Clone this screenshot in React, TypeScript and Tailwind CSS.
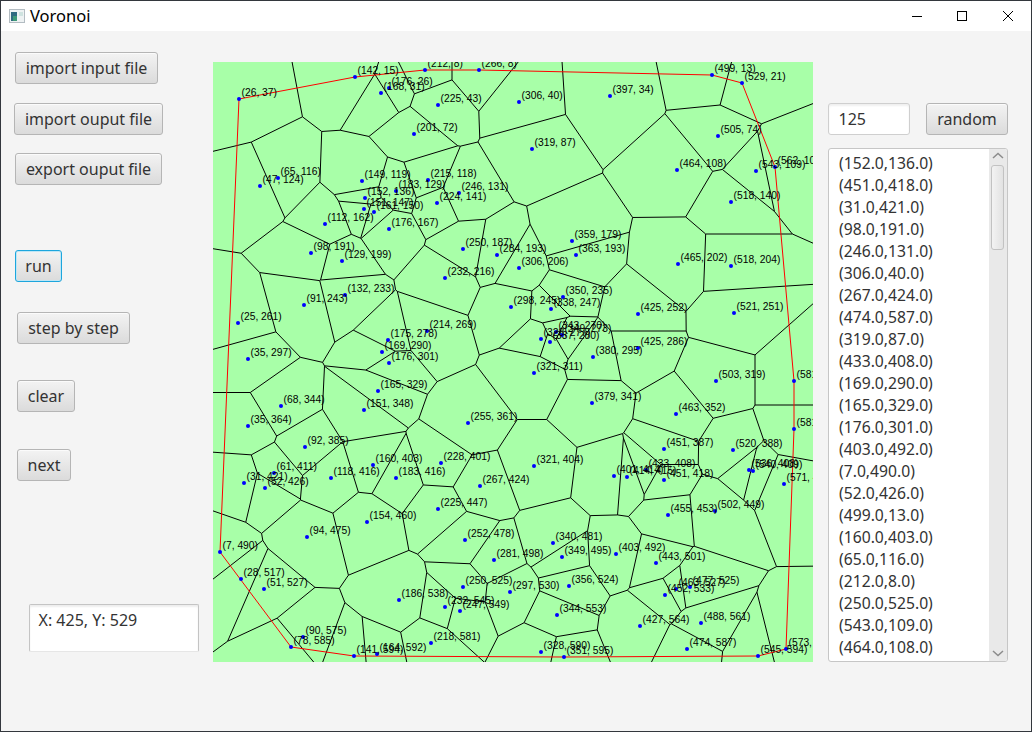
import React from "react";

type P = [number, number];

const pts: P[] = [
  [26,37],[142,15],[168,31],[176,26],[212,8],[266,8],[225,43],[306,40],[397,34],[201,72],
  [319,87],[65,116],[47,124],[149,119],[152,136],[183,129],[215,118],[246,131],[224,141],[151,147],
  [161,150],[176,167],[112,162],[250,187],[284,193],[98,191],[129,199],[232,216],[306,206],[132,233],
  [91,243],[214,269],[25,261],[35,297],[175,278],[169,290],[176,301],[298,245],[338,247],[350,235],
  [359,179],[363,193],[343,270],[349,273],[328,277],[337,280],[380,295],[321,311],[425,252],[425,286],
  [465,202],[518,204],[521,251],[464,108],[518,140],[505,74],[543,109],[562,105],[499,13],[529,21],
  [503,319],[581,319],[581,367],[463,352],[451,387],[379,341],[520,388],[433,408],[451,418],[536,408],
  [540,409],[571,422],[401,414],[414,415],[502,449],[455,453],[321,404],[340,481],[349,495],[403,492],
  [443,501],[356,524],[297,530],[344,553],[427,564],[488,561],[474,587],[452,533],[463,527],[477,525],
  [328,590],[351,595],[545,594],[573,587],[165,329],[151,348],[255,361],[68,344],[35,364],[92,385],
  [160,403],[183,416],[228,401],[267,424],[118,416],[61,411],[31,421],[52,426],[225,447],[154,460],
  [252,478],[281,498],[94,475],[7,490],[28,517],[51,527],[186,538],[250,525],[232,545],[247,549],
  [218,581],[90,575],[78,585],[141,594],[164,592],
];

const hull: P[] = [
  [26,37],[142,15],[212,8],[266,8],[499,13],[529,21],[562,105],[581,319],[581,367],[573,587],
  [545,594],[351,595],[141,594],[78,585],[7,490],
];

type V = { x: number; y: number; n: number };

function voronoiEdges(sites: P[]): string {
  let d = "";
  sites.forEach(([sx, sy], i) => {
    let poly: V[] = [
      { x: -3000, y: -3000, n: -1 },
      { x: 3600, y: -3000, n: -1 },
      { x: 3600, y: 3600, n: -1 },
      { x: -3000, y: 3600, n: -1 },
    ];
    sites.forEach(([tx, ty], j) => {
      if (j === i) return;
      const mx = (sx + tx) / 2;
      const my = (sy + ty) / 2;
      const nx = tx - sx;
      const ny = ty - sy;
      const side = (p: V) => (p.x - mx) * nx + (p.y - my) * ny;
      const out: V[] = [];
      poly.forEach((a, k) => {
        const b = poly[(k + 1) % poly.length];
        const da = side(a);
        const db = side(b);
        const t = da / (da - db);
        const cut = { x: a.x + (b.x - a.x) * t, y: a.y + (b.y - a.y) * t };
        if (da <= 0) {
          out.push(a);
          if (db > 0) out.push({ ...cut, n: j });
        } else if (db <= 0) {
          out.push({ ...cut, n: a.n });
        }
      });
      poly = out;
    });
    poly.forEach((a, k) => {
      const b = poly[(k + 1) % poly.length];
      if (a.n > i) d += `M${a.x.toFixed(2)} ${a.y.toFixed(2)}L${b.x.toFixed(2)} ${b.y.toFixed(2)}`;
    });
  });
  return d;
}

const edgePath = voronoiEdges(pts);

const listItems = [
  "(152.0,136.0)","(451.0,418.0)","(31.0,421.0)","(98.0,191.0)","(246.0,131.0)","(306.0,40.0)",
  "(267.0,424.0)","(474.0,587.0)","(319.0,87.0)","(433.0,408.0)","(169.0,290.0)","(165.0,329.0)",
  "(176.0,301.0)","(403.0,492.0)","(7.0,490.0)","(52.0,426.0)","(499.0,13.0)","(160.0,403.0)",
  "(65.0,116.0)","(212.0,8.0)","(250.0,525.0)","(543.0,109.0)","(464.0,108.0)",
];

function Btn({ label, className }: { label: string; className: string }) {
  return (
    <button
      className={`h-8 shrink-0 rounded-[3px] border border-[#b5b5b5] bg-linear-to-b from-[#f3f3f3] to-[#dbdbdb] text-center text-[16px] leading-none text-[#333] shadow-[inset_0_1px_0_#fbfbfb] ${className}`}
    >
      {label}
    </button>
  );
}

function Voronoi() {
  return (
    <svg width={600} height={600} viewBox="0 0 600 600" className="block bg-[#a8ffa8] font-['Liberation_Sans',Arial,sans-serif] text-[10.3px]">
      <path d={edgePath} fill="none" stroke="#000" strokeWidth={1} />
      <polygon points={hull.map((p) => p.join(",")).join(" ")} fill="none" stroke="#ff0000" strokeWidth={1} />
      {pts.map(([x, y]) => (
        <circle key={`${x}-${y}`} cx={x} cy={y} r={2} fill="#0000ff" />
      ))}
      {pts.map(([x, y]) => (
        <text key={`${x}-${y}`} x={x + 2.5} y={y - 3} fill="#000">
          {`(${x}, ${y})`}
        </text>
      ))}
    </svg>
  );
}

export default function App() {
  return (
    <div className="flex h-[732px] w-[1032px] flex-col overflow-hidden border border-[#33373d] bg-[#f4f4f4] font-['Noto_Sans',sans-serif] text-[#333]">
      <div className="flex h-[30px] shrink-0 items-center bg-white">
        <svg width={16} height={14} viewBox="0 0 16 14" className="ml-2 shrink-0">
          <rect x={0.5} y={0.5} width={15} height={13} fill="#eef2f3" stroke="#b3bcc2" />
          <rect x={2} y={3} width={6} height={9} fill="#2f6a80" />
          <rect x={4} y={7} width={4} height={5} fill="#3f9a78" />
          <rect x={10} y={3} width={4} height={4} fill="#cfe3e0" />
        </svg>
        <span className="ml-[5px] text-[16.5px] leading-none text-black">Voronoi</span>
        <div className="ml-auto flex items-center text-black">
          <svg width={10} height={10} viewBox="0 0 10 10" className="mr-[35px]">
            <path d="M0 5.5H10" stroke="#000" strokeWidth={1} />
          </svg>
          <svg width={10} height={10} viewBox="0 0 10 10" className="mr-[36px]">
            <rect x={0.5} y={0.5} width={9} height={9} fill="none" stroke="#000" />
          </svg>
          <svg width={10} height={10} viewBox="0 0 10 10" className="mr-[18px]">
            <path d="M0 0L10 10M10 0L0 10" stroke="#000" strokeWidth={1} />
          </svg>
        </div>
      </div>
      <div className="flex flex-1">
        <div className="flex w-[212px] shrink-0 flex-col items-start">
          <Btn label="import input file" className="ml-[14px] mt-[21px] w-[143px]" />
          <Btn label="import ouput file" className="ml-[13px] mt-[19px] w-[149px]" />
          <Btn label="export ouput file" className="ml-[14px] mt-[18px] w-[147px]" />
          <button className="ml-[14px] mt-[65px] h-8 w-[47px] rounded-[3px] border border-[#1da6dd] bg-linear-to-b from-[#f3f3f3] to-[#dbdbdb] text-[16px] leading-none text-[#333] shadow-[inset_0_0_0_1px_#bfe6f5]">
            run
          </button>
          <Btn label="step by step" className="ml-4 mt-[30px] w-[113px]" />
          <Btn label="clear" className="ml-4 mt-9 w-[58px]" />
          <Btn label="next" className="ml-4 mt-[37px] w-[54px]" />
          <div className="ml-[28px] mt-[123px] h-12 w-[170px] rounded-[2px] border border-[#c4c4c4] border-b-[#e6e6e6] bg-white pl-[8.5px] pt-[3px] text-[16px] leading-[24px] shadow-[inset_0_2px_2px_#eeeeee]">
            X: 425, Y: 529
          </div>
        </div>
        <div className="mt-[31px] shrink-0">
          <Voronoi />
        </div>
        <div className="ml-[15px] flex w-[180px] shrink-0 flex-col">
          <div className="mt-[72px] flex gap-4">
            <div className="flex h-8 w-[82px] items-center rounded-[3px] border border-[#cfcfcf] bg-white pb-[1px] pl-[9.5px] text-[16px] shadow-[inset_0_2px_2px_#f0f0f0]">
              125
            </div>
            <Btn label="random" className="w-[82px]" />
          </div>
          <div className="mt-[13px] flex h-[514px] overflow-hidden rounded-[3px] border border-[#c6c6c6] bg-white">
            <div className="flex-1 pl-[10px] pt-[3px] text-[15.7px] leading-[22px]">
              {listItems.map((t, i) => (
                <div key={i} className="whitespace-nowrap">
                  {t}
                </div>
              ))}
            </div>
            <div className="flex w-[18px] shrink-0 flex-col items-center bg-[#e9e9e9] pr-[1px]">
              <svg width={12} height={8} viewBox="0 0 12 8" className="mt-[3px]">
                <path d="M1 6L6 1.5L11 6" fill="none" stroke="#8c8c8c" strokeWidth={1.5} />
              </svg>
              <div className="mt-[5px] h-[85px] w-[13px] rounded-[3px] border border-[#c2c2c2] bg-linear-to-r from-[#f3f3f3] to-[#e2e2e2]" />
              <svg width={12} height={8} viewBox="0 0 12 8" className="mt-auto mb-[4px]">
                <path d="M1 2L6 6.5L11 2" fill="none" stroke="#8c8c8c" strokeWidth={1.5} />
              </svg>
            </div>
          </div>
        </div>
      </div>
    </div>
  );
}
